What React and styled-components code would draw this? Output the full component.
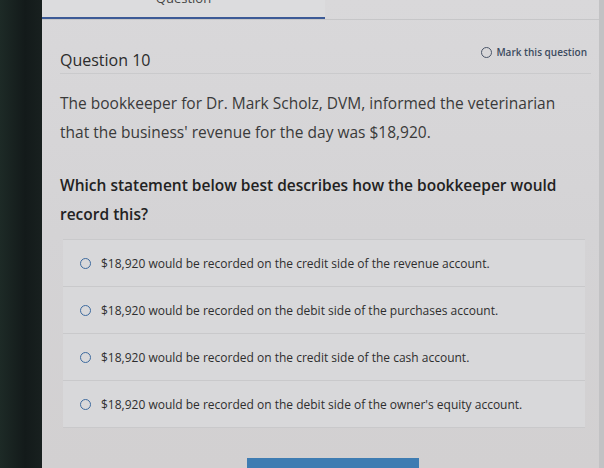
import React from "react";
import styled, { createGlobalStyle } from "styled-components";

const Global = createGlobalStyle`
  html, body { margin: 0; padding: 0; }
  body {
    width: 604px;
    height: 468px;
    overflow: hidden;
    background: #d3d2d4;
    font-family: "Open Sans", "Lato", sans-serif;
  }
`;

const Screen = styled.div`
  display: flex;
  width: 604px;
  height: 468px;
`;

const Bezel = styled.div`
  width: 42px;
  flex-shrink: 0;
  background: linear-gradient(90deg, #1d2a26 0%, #131a1a 60%, #18201f 100%);
`;

const Page = styled.div`
  flex: 1;
  display: flex;
  flex-direction: column;
  background: linear-gradient(180deg, #d9d8da 0%, #d4d3d5 50%, #d2d0d1 100%);
  border-right: 5px solid #c2c2c4;
`;

const TabBar = styled.div`
  display: flex;
  height: 19px;
  border-bottom: 1px solid #c6c6c8;
`;

const Tab = styled.div`
  width: 283px;
  height: 17px;
  background: #dcdcde;
  border-bottom: 2px solid #3c5a96;
  display: flex;
  justify-content: center;
  overflow: hidden;
  span {
    font-size: 13px;
    line-height: 13px;
    color: #444;
    margin-top: -8px;
  }
`;

const Content = styled.div`
  padding: 0 8px 0 18px;
  display: flex;
  flex-direction: column;
`;

const Header = styled.div`
  display: flex;
  justify-content: space-between;
  align-items: flex-start;
  margin-top: 25px;
  padding-bottom: 2px;
  border-bottom: 1px solid #cacacc;
`;

const Title = styled.h2`
  margin: 4px 0 0 0;
  font-size: 16px;
  line-height: 22px;
  font-weight: 500;
  color: #2b2b2b;
`;

const Mark = styled.div`
  display: flex;
  align-items: center;
  gap: 4px;
  font-size: 10px;
  font-weight: 600;
  color: #3c4b60;
  margin-right: 4px;
`;

const Radio = styled.span`
  width: ${(p) => p.size}px;
  height: ${(p) => p.size}px;
  border-radius: 50%;
  box-sizing: border-box;
  border: ${(p) => p.weight}px solid ${(p) => p.color};
  flex-shrink: 0;
`;

const Paragraph = styled.p`
  margin: ${(p) => p.top}px 0 0 0;
  font-size: 15.5px;
  line-height: 29px;
  font-weight: ${(p) => (p.strong ? 600 : 400)};
  color: ${(p) => (p.strong ? "#222" : "#3a3a3a")};
  padding-right: 16px;
`;

const Options = styled.div`
  margin: 10px 6px 0 3px;
  display: flex;
  flex-direction: column;
`;

const Option = styled.label`
  display: flex;
  align-items: center;
  gap: 10px;
  height: 46px;
  padding-left: 17px;
  background: #d8d8da;
  border-top: 1px solid #c9c9cb;
  font-size: 12px;
  color: #2e2e2e;
  &:last-child {
    border-bottom: 1px solid #c9c9cb;
  }
`;

const Footer = styled.div`
  flex: 1;
  display: flex;
  justify-content: center;
  align-items: flex-end;
`;

const Submit = styled.div`
  width: 172px;
  height: 10px;
  margin-left: 24px;
  background: #3e7cb2;
`;

const options = [
  "$18,920 would be recorded on the credit side of the revenue account.",
  "$18,920 would be recorded on the debit side of the purchases account.",
  "$18,920 would be recorded on the credit side of the cash account.",
  "$18,920 would be recorded on the debit side of the owner's equity account.",
];

export default function App() {
  return (
    <Screen>
      <Global />
      <Bezel />
      <Page>
        <TabBar>
          <Tab>
            <span>Question</span>
          </Tab>
        </TabBar>
        <Content>
          <Header>
            <Title>Question 10</Title>
            <Mark>
              <Radio size={11} weight={1} color="#4a5568" />
              Mark this question
            </Mark>
          </Header>
          <Paragraph top={15}>
            The bookkeeper for Dr. Mark Scholz, DVM, informed the veterinarian
            that the business' revenue for the day was $18,920.
          </Paragraph>
          <Paragraph top={24} strong>
            Which statement below best describes how the bookkeeper would record
            this?
          </Paragraph>
          <Options>
            {options.map((o) => (
              <Option key={o}>
                <Radio size={11} weight={1.5} color="#3d6a9e" />
                {o}
              </Option>
            ))}
          </Options>
        </Content>
        <Footer>
          <Submit />
        </Footer>
      </Page>
    </Screen>
  );
}
